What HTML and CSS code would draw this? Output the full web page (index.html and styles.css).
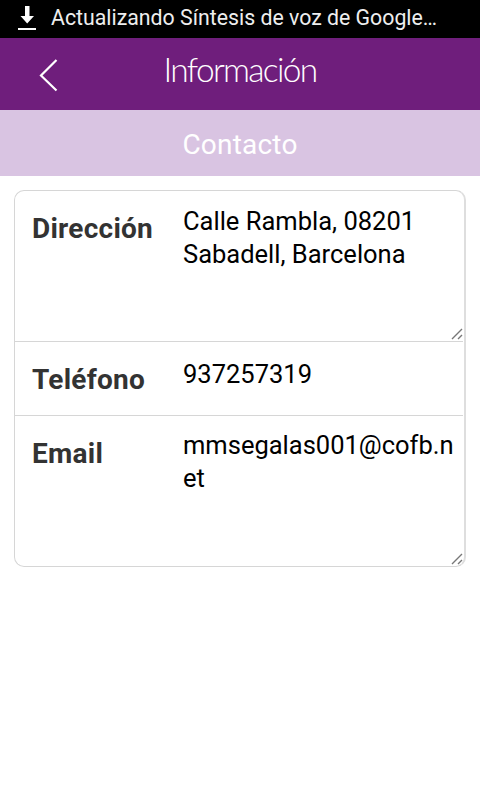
FILE: index.html
```html
<!DOCTYPE html>
<html lang="es">

<head>
    <meta charset="UTF-8">
    <meta name="viewport" content="width=device-width, initial-scale=1.0">
    <title>Información</title>
    <link rel="stylesheet" href="styles.css">
</head>

<body>
    <div class="wrapper">
        <div class="statusbar">
            <svg class="download" width="18" height="24" viewBox="0 0 18 24">
                <path d="M7 0h4.500v10h4.500L9.200 17.500 2.500 10H7z" fill="#fff" />
                <path d="M0 22h18v2H0z" fill="#fff" />
            </svg>
            <span class="notice">Actualizando Síntesis de voz de Google…</span>
        </div>
        <header>
            <a href="#" class="back">
                <svg width="20" height="34" viewBox="0 0 20 34">
                    <path d="M17.500 2L2 17.500l15.500 15" fill="none" stroke="#fff" stroke-width="2.200" />
                </svg>
            </a>
            <h1>Información</h1>
        </header>
        <h2>Contacto</h2>
        <main>
            <ul class="fields">
                <li class="field area">
                    <span class="label">Dirección</span>
                    <div class="value">Calle Rambla, 08201 Sabadell, Barcelona</div>
                    <svg class="grip" width="12" height="12" viewBox="0 0 12 12">
                        <path d="M1 11L11 1M7 11l4-4" stroke="#777" stroke-width="1.400" />
                    </svg>
                </li>
                <li class="field phone">
                    <span class="label">Teléfono</span>
                    <div class="value">937257319</div>
                </li>
                <li class="field area email">
                    <span class="label">Email</span>
                    <div class="value">mmsegalas001@cofb.net</div>
                    <svg class="grip" width="12" height="12" viewBox="0 0 12 12">
                        <path d="M1 11L11 1M7 11l4-4" stroke="#777" stroke-width="1.400" />
                    </svg>
                </li>
            </ul>
        </main>
    </div>
</body>

</html>
```
FILE: styles.css
```css
* {
    box-sizing: border-box;
}

body {
    margin: 0;
    background-color: #fff;
    font-family: Roboto, sans-serif;
}

ul {
    list-style: none;
    margin: 0;
    padding: 0;
}

svg {
    display: block;
}

.statusbar {
    display: flex;
    align-items: flex-start;
    gap: 15px;
    height: 38px;
    padding: 6px 18px 0;
    background-color: #000;
    color: #eee;
}

.statusbar .notice {
    font-size: 21.300px;
    line-height: 24px;
    white-space: nowrap;
}

header {
    display: grid;
    grid-template-columns: 80px 1fr 80px;
    height: 72px;
    background-color: #6f1e7c;
}

header .back {
    padding: 20px 0 0 39px;
}

header h1 {
    margin: 0;
    padding-top: 11px;
    color: #fff;
    font-family: Lato, sans-serif;
    font-size: 33.500px;
    font-weight: 300;
    line-height: 40px;
    letter-spacing: -1.700px;
    text-align: center;
}

h2 {
    margin: 0;
    height: 66px;
    background-color: #d9c4e2;
    color: #fff;
    font-size: 28px;
    font-weight: 400;
    line-height: 69px;
    letter-spacing: 0.200px;
    text-align: center;
}

main {
    padding: 14px;
}

.fields {
    border: 1px solid #d6d6d6;
    border-right: 2px solid #dedede;
    border-radius: 10px;
}

.field {
    position: relative;
    display: grid;
    grid-template-columns: 151px 1fr;
    height: 74px;
    margin-right: 1px;
    padding: 14px 7px 0 17px;
    border-bottom: 1px solid #d6d6d6;
}

.field.area {
    height: 151px;
}

.field.email {
    height: 150px;
}

.field:last-child {
    border-bottom: 0;
}

.label {
    padding-top: 7px;
    color: #333;
    font-size: 28px;
    font-weight: 700;
    line-height: 34px;
    letter-spacing: 0.250px;
}

.value {
    color: #000;
    font-size: 25.500px;
    line-height: 33px;
    overflow-wrap: anywhere;
}

.phone .value {
    padding-top: 2px;
}

.email .value {
    margin-top: -1px;
    word-break: break-all;
}

.grip {
    position: absolute;
    right: 0;
    bottom: 1px;
}
```
